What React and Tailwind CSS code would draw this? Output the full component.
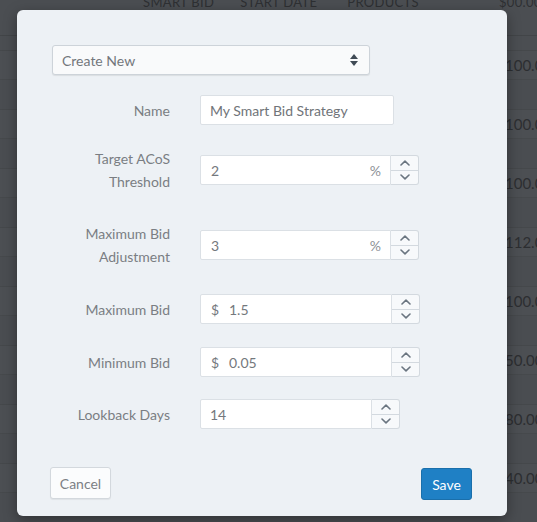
import React from "react";

const values = ["100.00", "100.00", "100.00", "112.00", "100.00", "50.00", "80.00", "40.00"];

function Spinner({ className = "" }) {
    return (
        <div className={"flex flex-col w-[28px] h-full border border-[#d3d9df] rounded-r-[3px] bg-[#f7f9fb] " + className}>
            <div className="flex-1 flex items-center justify-center border-b border-[#d3d9df]">
                <svg width="10" height="6" viewBox="0 0 10 6"><polyline points="1,5 5,1.2 9,5" fill="none" stroke="#6a7580" strokeWidth="1.6" strokeLinecap="round" strokeLinejoin="round" /></svg>
            </div>
            <div className="flex-1 flex items-center justify-center">
                <svg width="10" height="6" viewBox="0 0 10 6"><polyline points="1,1 5,4.8 9,1" fill="none" stroke="#6a7580" strokeWidth="1.6" strokeLinecap="round" strokeLinejoin="round" /></svg>
            </div>
        </div>
    )
}

function Label({ children }) {
    return <div className="w-[118px] shrink-0 text-right leading-[23px] text-[#7a7e83]">{children}</div>
}

export default function App() {
    return (
        <div className="relative w-[537px] h-[522px] overflow-hidden bg-[#4b4e52] font-['Lato',sans-serif] text-[14px]">

            {/* table behind the dialog */}
            <div className="h-[42px]">
                <div className="flex whitespace-nowrap text-[13px] tracking-wide text-[#2e3033] -mt-[7px]">
                    <span className="ml-[143px]">SMART BID</span>
                    <span className="ml-[26px]">START DATE</span>
                    <span className="ml-[30px]">PRODUCTS</span>
                    <span className="ml-[80px]">$00.00</span>
                </div>
            </div>
            <div className="h-[15px] border-t border-[#424548]"></div>
            {values.map((v, i) => (
                <div key={i}>
                    <div className="h-[29px] border-t border-[#45484b] bg-[#4c4f53] flex items-center whitespace-nowrap">
                        <span className="ml-[505px] text-[#2c2e31] text-[15px]">{v}</span>
                    </div>
                    <div className="h-[30px] border-t border-[#46494c] bg-[#4a4d51]"></div>
                </div>
            ))}

            {/* dialog */}
            <div className="absolute left-[17px] top-[10px] w-[490px] h-[506px] bg-[#edf1f5] rounded-[6px] shadow-[0_4px_14px_rgba(0,0,0,0.35)] flex flex-col pl-[35px] pt-[35px] text-[#74787d]">

                <div className="w-[318px] h-[30px] flex items-center justify-between px-[9px] bg-[#f9fafb] border border-[#cdd3d9] rounded-[3px] shadow-[0_1px_1px_rgba(0,0,0,0.08)]">
                    <span className="text-[#73777c]">Create New</span>
                    <svg width="8" height="12" viewBox="0 0 8 12" className="mr-[2px]">
                        <polygon points="4,0 8,5 0,5" fill="#3f4a55" />
                        <polygon points="0,7 8,7 4,12" fill="#3f4a55" />
                    </svg>
                </div>

                <div className="flex items-center gap-[30px] mt-[20px]">
                    <Label>Name</Label>
                    <div className="w-[194px] h-[30px] flex items-center px-[9px] bg-white border border-[#dbe0e5] rounded-[2px]">
                        <span className="text-[#707479]">My Smart Bid Strategy</span>
                    </div>
                </div>

                <div className="flex items-center gap-[30px] mt-[22px]">
                    <Label>Target ACoS<br />Threshold</Label>
                    <div className="flex h-[30px]">
                        <div className="w-[191px] flex items-center justify-between pl-[10px] pr-[9px] bg-white border border-[#dbe0e5] rounded-l-[2px]">
                            <span>2</span>
                            <span className="text-[#8e9297]">%</span>
                        </div>
                        <Spinner className="border-l-0" />
                    </div>
                </div>

                <div className="flex items-center gap-[30px] mt-[29px]">
                    <Label>Maximum Bid<br />Adjustment</Label>
                    <div className="flex h-[30px]">
                        <div className="w-[191px] flex items-center justify-between pl-[10px] pr-[9px] bg-white border border-[#dbe0e5] rounded-l-[2px]">
                            <span>3</span>
                            <span className="text-[#8e9297]">%</span>
                        </div>
                        <Spinner className="border-l-0" />
                    </div>
                </div>

                <div className="flex items-center gap-[30px] mt-[26px]">
                    <Label>Maximum Bid</Label>
                    <div className="flex h-[30px]">
                        <div className="w-[192px] flex items-center pl-[10px] bg-white border border-[#dbe0e5] rounded-l-[2px]">
                            <span className="w-[18px]">$</span>
                            <span>1.5</span>
                        </div>
                        <Spinner className="border-l-0" />
                    </div>
                </div>

                <div className="flex items-center gap-[30px] mt-[23px]">
                    <Label>Minimum Bid</Label>
                    <div className="flex h-[30px]">
                        <div className="w-[192px] flex items-center pl-[10px] bg-white border border-[#dbe0e5] rounded-l-[2px]">
                            <span className="w-[18px]">$</span>
                            <span>0.05</span>
                        </div>
                        <Spinner className="border-l-0" />
                    </div>
                </div>

                <div className="flex items-center gap-[30px] mt-[22px]">
                    <Label>Lookback Days</Label>
                    <div className="flex h-[30px]">
                        <div className="w-[172px] flex items-center pl-[9px] bg-white border border-[#dbe0e5] rounded-l-[2px]">
                            <span>14</span>
                        </div>
                        <Spinner className="border-l-0" />
                    </div>
                </div>

                <div className="mt-auto mb-[17px] -ml-[2px] mr-[35px] flex items-end justify-between">
                    <button className="w-[61px] h-[32px] bg-[#fbfcfd] border border-[#d3d8dd] rounded-[3px] text-[#7c8085] shadow-[0_1px_1px_rgba(0,0,0,0.06)]">Cancel</button>
                    <button className="w-[51px] h-[32px] -mb-[1px] bg-[#1f80c5] border border-[#1a6fab] rounded-[3px] text-white">Save</button>
                </div>
            </div>
        </div>
    )
}
